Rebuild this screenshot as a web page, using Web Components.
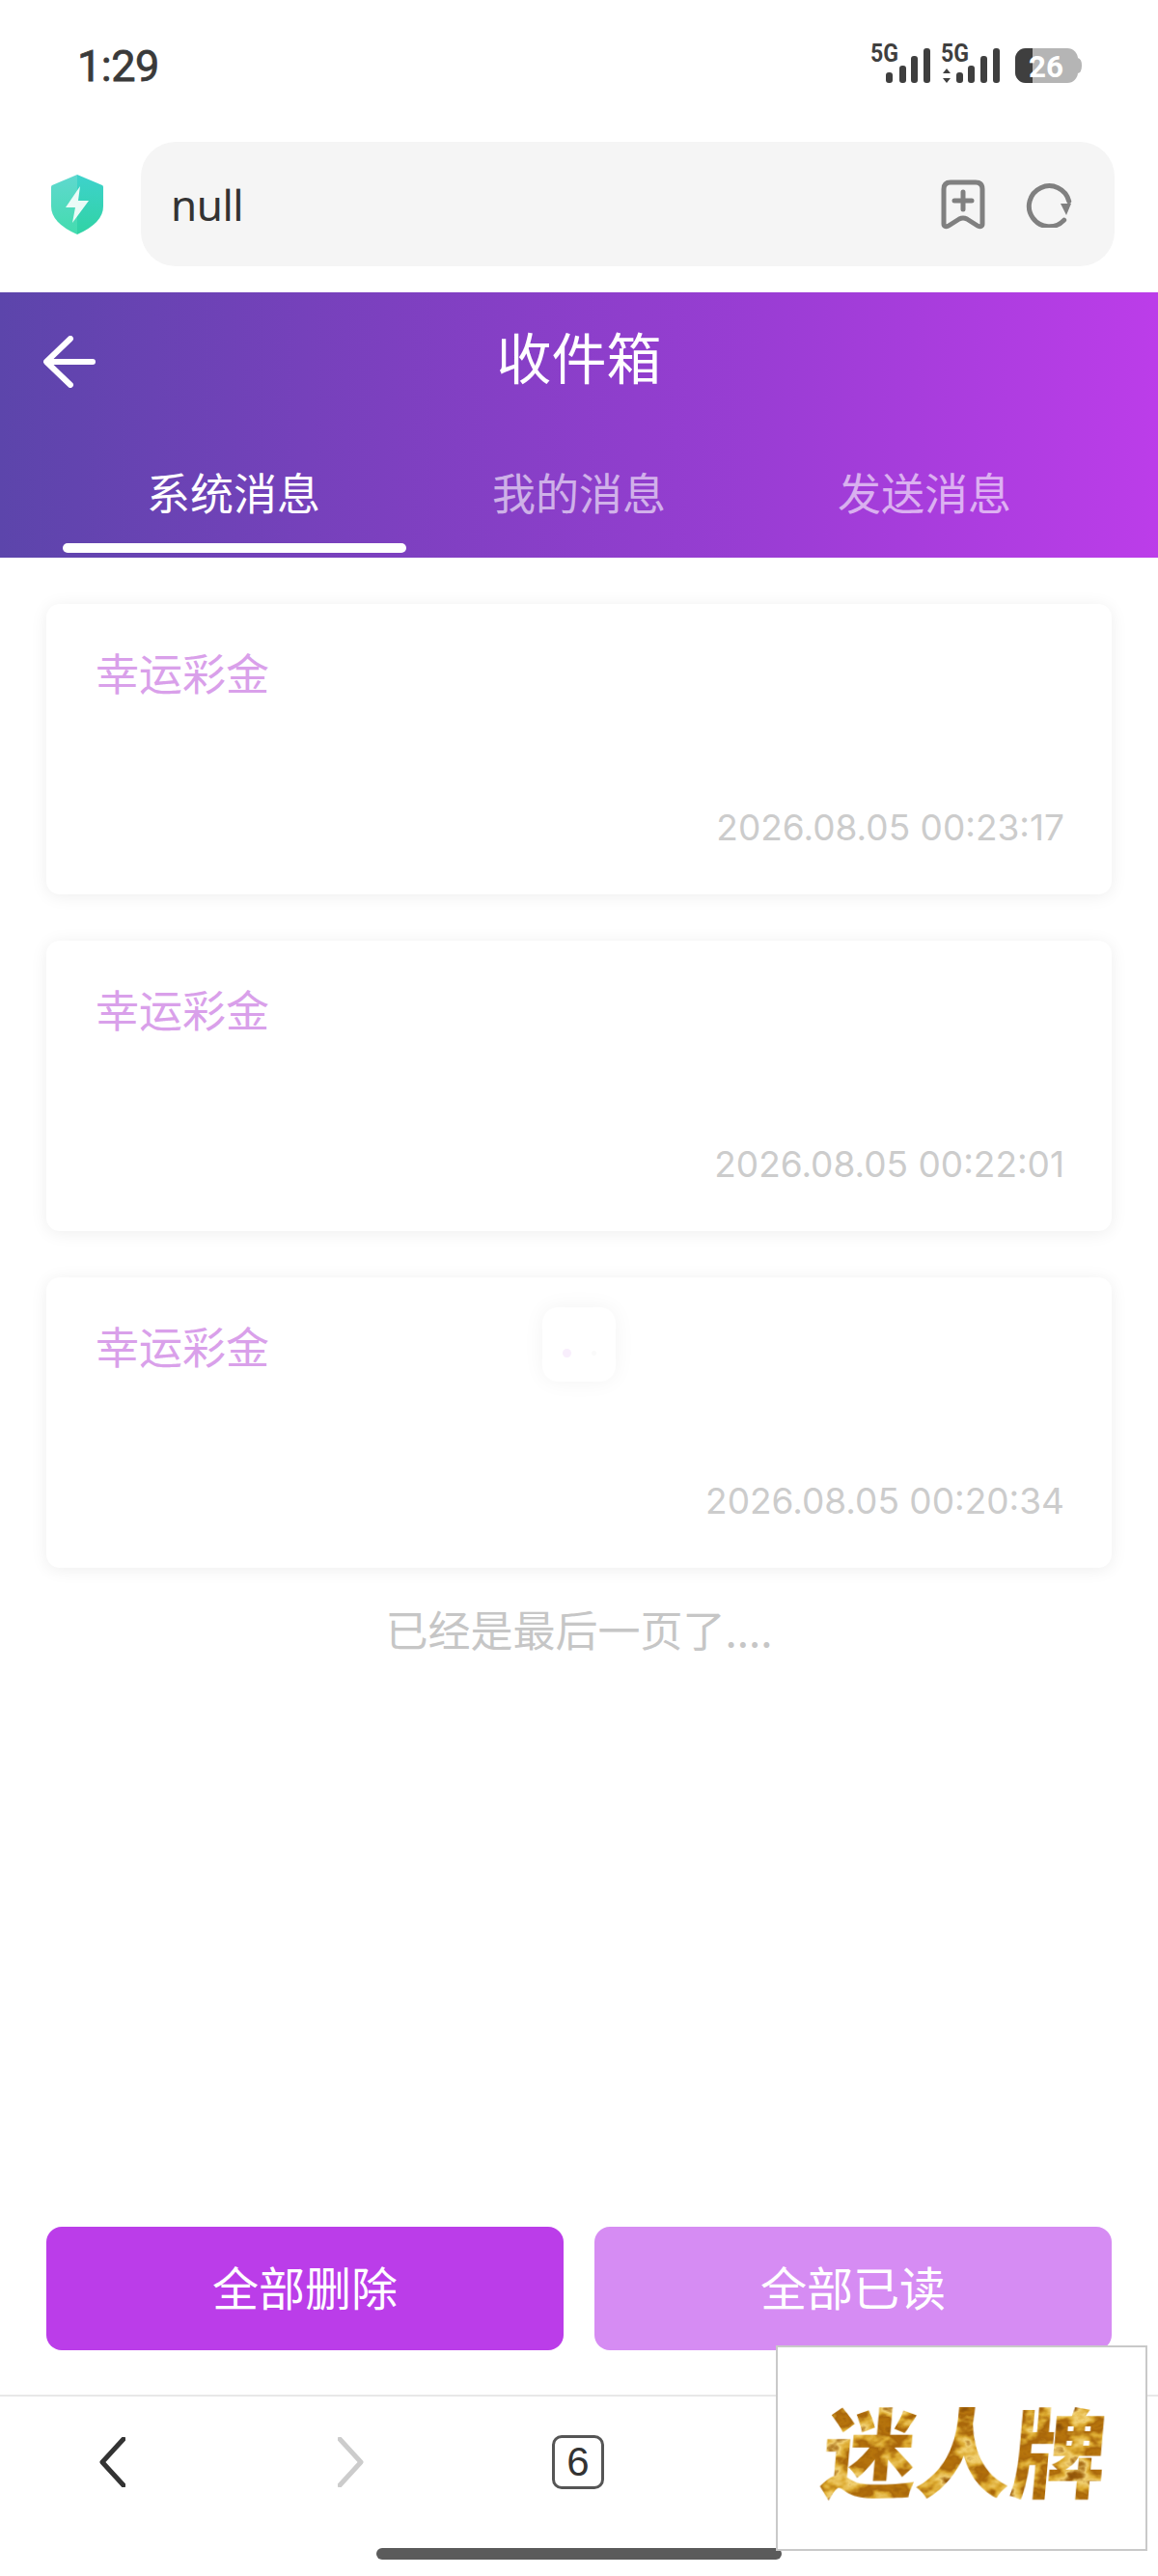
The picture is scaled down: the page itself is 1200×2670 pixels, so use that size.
<!DOCTYPE html>
<html lang="zh">
<head>
<meta charset="utf-8">
<title>收件箱</title>
<style>
  html, body { margin: 0; padding: 0; background: #fff; }
  body { font-family: "Noto Sans CJK SC", "Noto Sans", sans-serif; }
</style>
</head>
<body>
<app-shell>
  <status-bar slot="top"></status-bar>
  <browser-bar slot="top">null</browser-bar>
  <inbox-header slot="top" title="收件箱">
    <inbox-tab active>系统消息</inbox-tab>
    <inbox-tab>我的消息</inbox-tab>
    <inbox-tab>发送消息</inbox-tab>
  </inbox-header>

  <message-list>
    <message-card>幸运彩金<span slot="time">2026.08.05 00:23:17</span></message-card>
    <message-card>幸运彩金<span slot="time">2026.08.05 00:22:01</span></message-card>
    <message-card>幸运彩金<span slot="time">2026.08.05 00:20:34</span></message-card>
    <span slot="end">已经是最后一页了....</span>
  </message-list>

  <action-bar slot="bottom">
    <action-button>全部删除</action-button>
    <action-button light>全部已读</action-button>
  </action-bar>
  <browser-nav slot="bottom"></browser-nav>

  <loading-toast slot="overlay"></loading-toast>
  <logo-badge slot="overlay">迷人牌</logo-badge>
</app-shell>

<script>
function define(name, html) {
  customElements.define(name, class extends HTMLElement {
    constructor() {
      super();
      const tpl = document.createElement('template');
      tpl.innerHTML = html;
      this.attachShadow({ mode: 'open' }).appendChild(tpl.content.cloneNode(true));
    }
  });
}

define('app-shell', `
  <style>
    :host { display: flex; flex-direction: column; position: relative; width: 1200px; height: 2670px; overflow: hidden; background: #fff; }
    main { flex: 1; min-height: 0; }
  </style>
  <slot name="top"></slot>
  <main><slot></slot></main>
  <slot name="bottom"></slot>
  <slot name="overlay"></slot>
`);

define('status-bar', `
  <style>
    :host { display: flex; justify-content: space-between; height: 147px; padding: 0 75px 0 80px; box-sizing: border-box; color: #3a3a3a; }
    .time { font: 400 45px/1 Roboto, "Liberation Sans", sans-serif; margin-top: 46px; letter-spacing: -0.5px; -webkit-text-stroke: .8px #3a3a3a; }
    svg { display: block; margin-top: 40px; }
    text { font-family: Roboto, "Liberation Sans", sans-serif; }
  </style>
  <div class="time">1:29</div>
  <svg width="225" height="52" viewBox="900 40 225 52" fill="#3f3f3f">
    <text x="902" y="64" font-size="25" font-weight="700" textLength="29" lengthAdjust="spacingAndGlyphs">5G</text>
    <rect x="918" y="75" width="7" height="11" rx="3"/>
    <rect x="932" y="68" width="7" height="18" rx="3"/>
    <rect x="944" y="58" width="7" height="28" rx="3"/>
    <rect x="957" y="50" width="7" height="36" rx="3"/>
    <text x="975" y="64" font-size="25" font-weight="700" textLength="29" lengthAdjust="spacingAndGlyphs">5G</text>
    <path d="M981 71l4 5h-8zM981 86l4-5h-8z"/>
    <rect x="991" y="75" width="7" height="11" rx="3"/>
    <rect x="1003" y="68" width="7" height="18" rx="3"/>
    <rect x="1016" y="58" width="7" height="28" rx="3"/>
    <rect x="1029" y="50" width="7" height="36" rx="3"/>
    <rect x="1052" y="50" width="65" height="36" rx="11" fill="#b5b5b5"/>
    <path d="M1117 60q4 1 4 8q0 7-4 8z" fill="#b5b5b5"/>
    <path d="M1063 50h7v36h-7a11 11 0 0 1-11-11v-14a11 11 0 0 1 11-11z"/>
    <text x="1066" y="80" font-size="31" font-weight="700" fill="#fff" textLength="36" lengthAdjust="spacingAndGlyphs">26</text>
  </svg>
`);

define('browser-bar', `
  <style>
    :host { display: flex; align-items: flex-start; height: 156px; padding-left: 52px; padding-right: 45px; box-sizing: border-box; }
    .shield { width: 56px; height: 62px; margin-top: 34px; flex: none; }
    .field { flex: 1; height: 129px; margin-left: 38px; padding: 0 44px 0 31px; box-sizing: border-box; display: flex; align-items: center; background: #f5f5f5; border-radius: 36px; font: 400 44px/1 "Noto Sans", "Open Sans", sans-serif; color: #333; }
    .url { flex: 1; letter-spacing: -0.5px; }
    .icons { display: flex; align-items: center; gap: 42px; }
    svg { display: block; }
  </style>
  <svg class="shield" viewBox="0 0 56 62">
    <defs>
      <linearGradient id="sl" x1="0" y1="0" x2="0" y2="1"><stop offset="0" stop-color="#5fd8cf"/><stop offset="1" stop-color="#43dcae"/></linearGradient>
      <linearGradient id="sr" x1="0" y1="0" x2="0" y2="1"><stop offset="0" stop-color="#3ed2cc"/><stop offset="1" stop-color="#30d3a4"/></linearGradient>
    </defs>
    <path d="M28 0L54 11Q55 11.500 55 13V33Q55 50 28 62Z" fill="url(#sr)"/>
    <path d="M28 0L2 11Q1 11.500 1 13V33Q1 50 28 62Z" fill="url(#sl)"/>
    <path d="M31 12L16 34H26L23 50L40 27H29Z" fill="#eafbf7"/>
  </svg>
  <div class="field">
    <div class="url"><slot></slot></div>
    <div class="icons">
      <svg width="46" height="52" viewBox="0 0 46 52" fill="none" stroke="#808080" stroke-width="5" stroke-linecap="round" stroke-linejoin="round">
        <path d="M10 3H36Q43 3 43 10V46Q43 50 38 48L27 41Q23 39 19 41L8 48Q3 50 3 46V10Q3 3 10 3Z"/>
        <path d="M23 13V31M14 22H32"/>
      </svg>
      <svg width="48" height="48" viewBox="0 0 48 48" fill="none">
        <path d="M36 43A21 21 0 1 1 45 25" stroke="#808080" stroke-width="5" stroke-linecap="round" transform="rotate(-12 24 24)"/>
        <path d="M36 23H47L42 35Z" fill="#808080"/>
      </svg>
    </div>
  </div>
`);

define('inbox-header', `
  <style>
    :host { display: flex; flex-direction: column; height: 275px; position: relative; background: linear-gradient(90deg, #5c45ab 0%, #7c40bf 33%, #9a3dd4 66%, #bc3de9 100%); color: #fff; }
    .top { height: 134px; display: flex; align-items: center; justify-content: center; }
    h1 { margin: 0 0 3px; font: 400 57px/1 "Noto Sans CJK SC", sans-serif; }
    .back { position: absolute; left: 45px; top: 45px; }
    .tabs { display: grid; grid-template-columns: repeat(3, 358px); padding-left: 63px; flex: 1; }
  </style>
  <svg class="back" width="54" height="54" viewBox="0 0 54 54" fill="none" stroke="#fff" stroke-width="6" stroke-linecap="round" stroke-linejoin="round">
    <path d="M28 3L3 27L28 51M4 27H51"/>
  </svg>
  <div class="top"><h1></h1></div>
  <div class="tabs"><slot></slot></div>
`);
customElements.whenDefined('inbox-header').then(() => {
  document.querySelectorAll('inbox-header').forEach(el => {
    el.shadowRoot.querySelector('h1').textContent = el.getAttribute('title');
  });
});

define('inbox-tab', `
  <style>
    :host { display: flex; flex-direction: column; align-items: center; position: relative; font: 400 45px/64px "Noto Sans CJK SC", sans-serif; color: rgba(255,255,255,.6); padding-top: 41px; }
    :host([active]) { color: #fff; }
    :host([active])::after { content: ""; position: absolute; left: 2px; right: 0; bottom: 5px; height: 10px; background: #fff; border-radius: 5px; }
  </style>
  <slot></slot>
`);

define('message-list', `
  <style>
    :host { display: flex; flex-direction: column; gap: 48px; padding: 48px 48px 0; }
    .end { margin-top: -15px; text-align: center; font: 400 44px/60px "Noto Sans CJK SC", sans-serif; color: #c6c6c6; }
  </style>
  <slot></slot>
  <div class="end"><slot name="end"></slot></div>
`);

define('message-card', `
  <style>
    :host { display: flex; flex-direction: column; justify-content: space-between; height: 301px; padding: 41px 49px 40px 51px; box-sizing: border-box; background: #fff; border-radius: 14px; box-shadow: 0 2px 18px rgba(0,0,0,.07); font: 400 45px/60px "Noto Sans CJK SC", sans-serif; color: #d9a0ea; }
    .time { text-align: right; font: 400 37px/58px Inter, "Noto Sans", sans-serif; color: #cccccc; }
  </style>
  <div><slot></slot></div>
  <div class="time"><slot name="time"></slot></div>
`);

define('action-bar', `
  <style>
    :host { display: grid; grid-template-columns: 1fr 1fr; gap: 32px; padding: 0 48px 46px; }
  </style>
  <slot></slot>
`);

define('action-button', `
  <style>
    :host { display: flex; align-items: center; justify-content: center; height: 128px; padding-bottom: 6px; box-sizing: border-box; border-radius: 16px; background: #bb3de9; color: #fff; font: 400 48px/1 "Noto Sans CJK SC", sans-serif; }
    :host([light]) { background: #d68cf3; }
  </style>
  <slot></slot>
`);

define('browser-nav', `
  <style>
    :host { display: block; border-top: 2px solid #e8e8e8; height: 188px; box-sizing: border-box; }
    .row { display: flex; align-items: center; height: 136px; padding-left: 103px; }
    .fwd { margin-left: 220px; }
    .tabs { margin-left: 195px; width: 54px; height: 56px; box-sizing: border-box; border: 3px solid #555; border-radius: 10px; display: flex; align-items: center; justify-content: center; font: 400 42px/1 "Liberation Sans", sans-serif; color: #333; }
    .home { width: 420px; height: 12px; margin: 21px auto 0; border-radius: 6px; background: #5b5b5b; }
    svg { display: block; }
  </style>
  <div class="row">
    <svg width="27" height="52" viewBox="0 0 27 52" fill="none" stroke="#333" stroke-width="5" stroke-linecap="round" stroke-linejoin="round"><path d="M25 2L3 26L25 50"/></svg>
    <svg class="fwd" width="27" height="52" viewBox="0 0 27 52" fill="none" stroke="#ccc" stroke-width="5" stroke-linecap="round" stroke-linejoin="round"><path d="M2 2L24 26L2 50"/></svg>
    <div class="tabs">6</div>
  </div>
  <div class="home"></div>
`);

define('loading-toast', `
  <style>
    :host { position: absolute; left: 562px; top: 1355px; width: 76px; height: 77px; background: #fff; border-radius: 16px; box-shadow: 0 0 22px rgba(0,0,0,.05); }
    i { position: absolute; top: 43px; border-radius: 50%; }
    .a { left: 21px; width: 9px; height: 9px; background: #f8eefc; }
    .b { left: 51px; width: 5px; height: 5px; top: 45px; background: #fafafa; }
  </style>
  <i class="a"></i><i class="b"></i>
`);

define('logo-badge', `
  <style>
    :host { position: absolute; left: 804px; top: 2431px; width: 385px; height: 213px; box-sizing: border-box; background: #fff; border: 2px solid #c9c9c9; display: flex; align-items: center; justify-content: center; }
    svg { position: absolute; width: 0; height: 0; }
    .mark {
      margin: 0 0 0 6px;
      font: 900 100px/1.1 "Noto Sans CJK SC", "Noto Sans CJK JP", sans-serif;
      white-space: nowrap;
      transform: skewX(-5deg) scaleX(.98);
      color: #000;
      filter: url(#gold);
    }
  </style>
  <svg aria-hidden="true">
    <filter id="gold" x="0" y="0" width="100%" height="100%" color-interpolation-filters="sRGB">
      <feTurbulence type="fractalNoise" baseFrequency="0.028 0.04" numOctaves="4" seed="7" result="n"/>
      <feColorMatrix in="n" type="matrix" values="1 0 0 0 0  1 0 0 0 0  1 0 0 0 0  0 0 0 0 1"/>
      <feComponentTransfer result="marble">
        <feFuncR type="table" tableValues="0.36 0.46 0.58 0.72 0.66 0.86 0.95 0.62 0.48 0.80"/>
        <feFuncG type="table" tableValues="0.20 0.26 0.34 0.46 0.40 0.66 0.82 0.38 0.26 0.56"/>
        <feFuncB type="table" tableValues="0.02 0.02 0.03 0.05 0.04 0.18 0.45 0.05 0.02 0.12"/>
      </feComponentTransfer>
      <feComposite in="marble" in2="SourceAlpha" operator="in"/>
    </filter>
  </svg>
  <div class="mark"><slot></slot></div>
`);
</script>
</body>
</html>
